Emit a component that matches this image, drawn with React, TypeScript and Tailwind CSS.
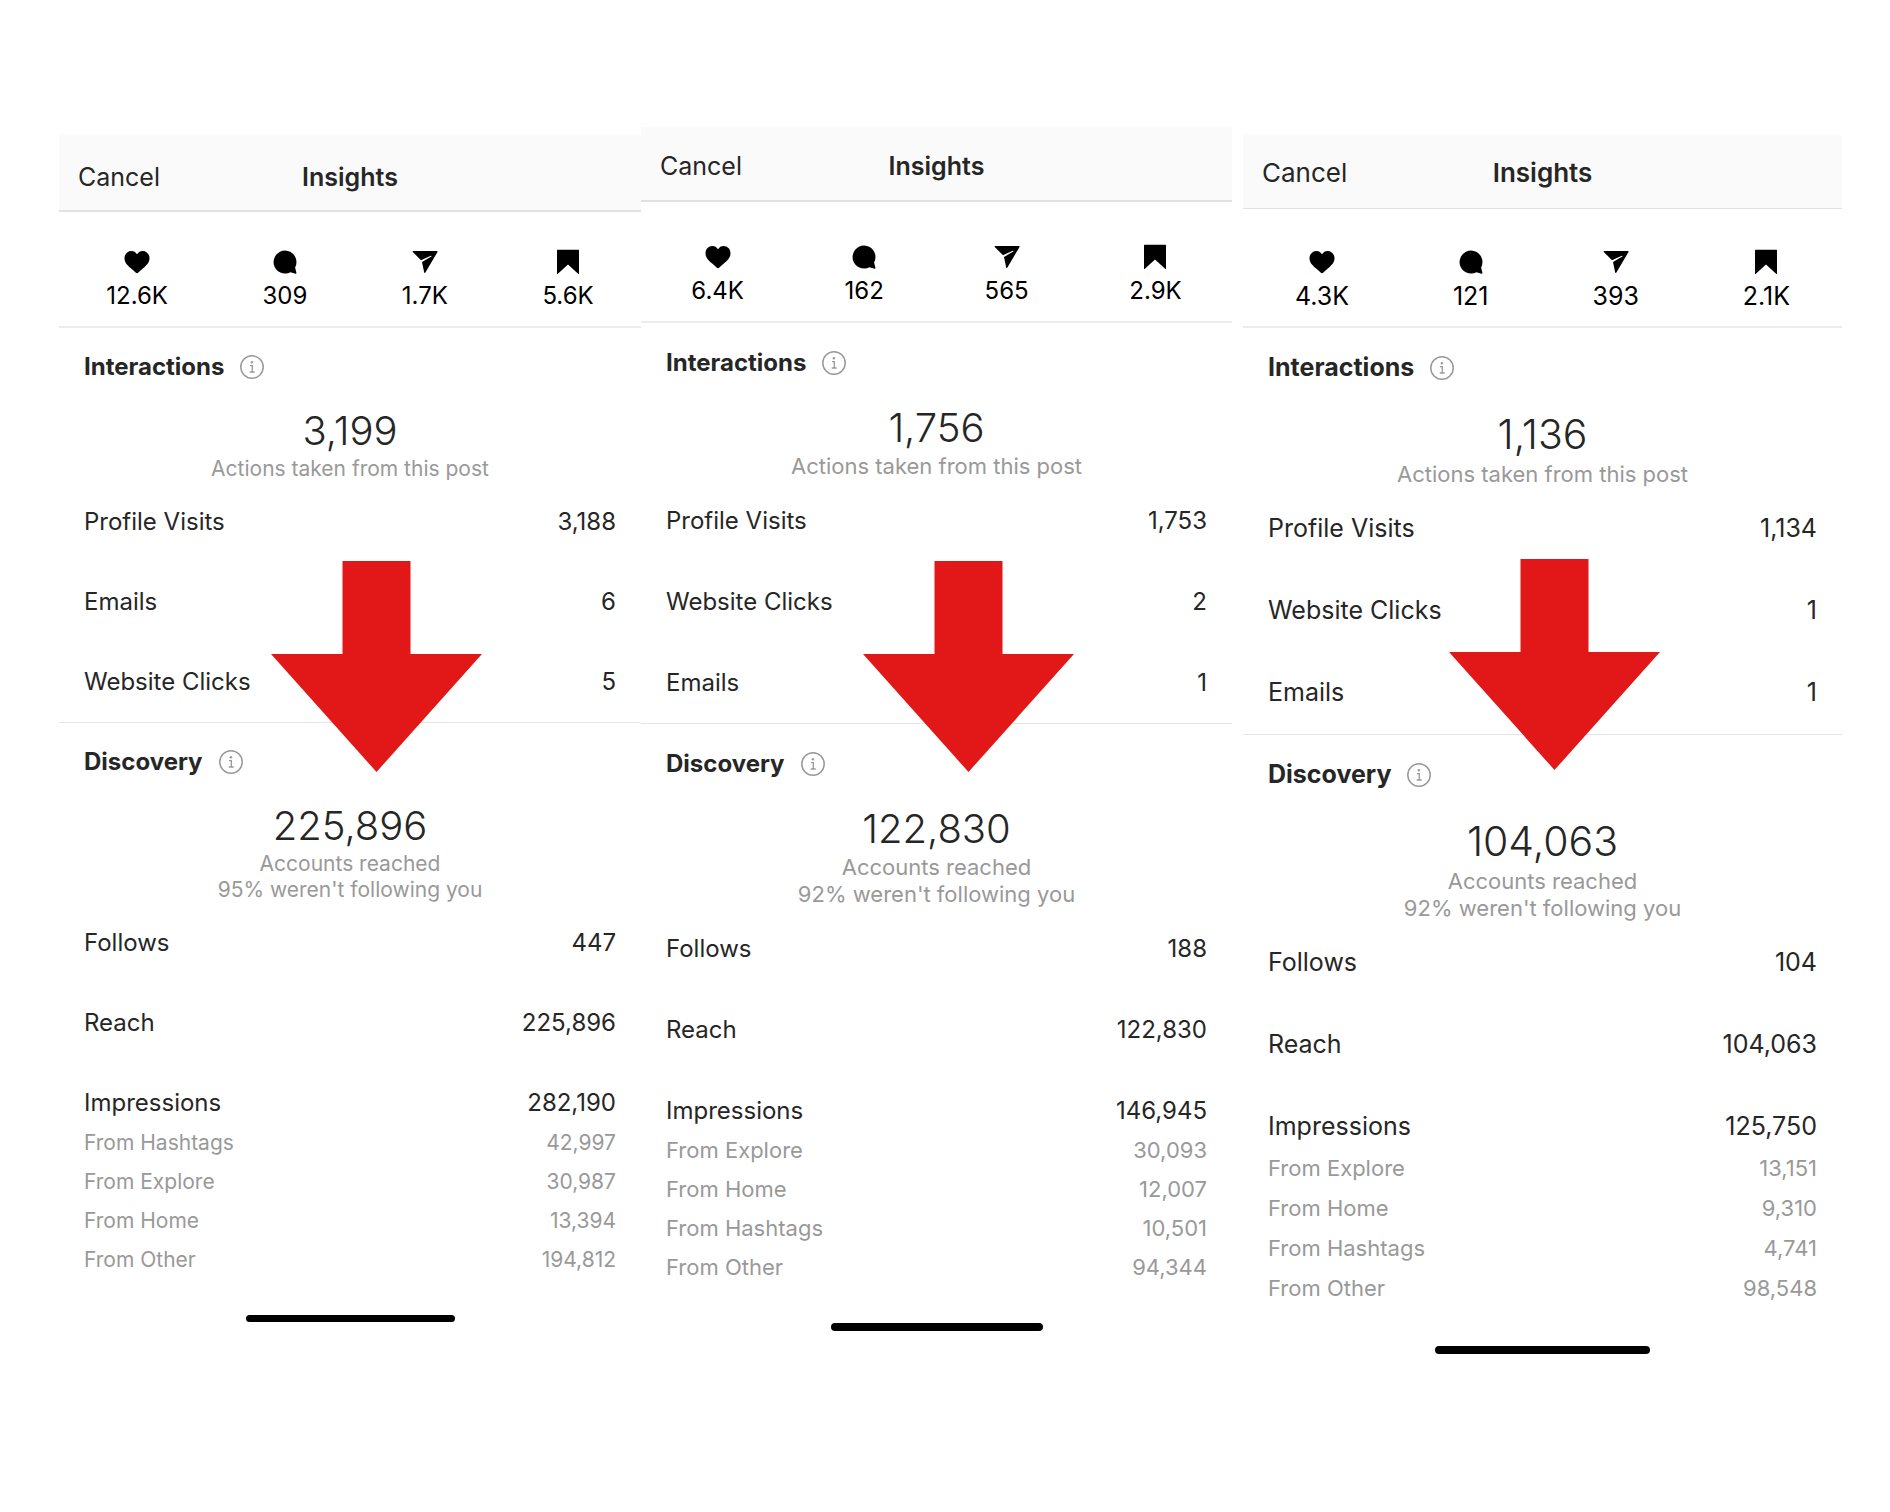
interface Row {
  label: string
  value: string
}

interface Panel {
  stats: { likes: string; comments: string; shares: string; saves: string }
  interactions: string
  actions: Row[]
  discovery: string
  notFollowing: string
  reach: Row[]
  impressions: string
  sources: Row[]
  size: typeof small
}

const small = {
  panel: "mt-2",
  header: "h-[77px] border-b-2 pb-[17px]",
  title: "text-[25px]",
  stats: "h-[116px]",
  body: "text-[24px]",
  heading: "h-[78px]",
  total: "h-[50px] text-[40px]",
  note: "text-[21px] leading-[26px]",
  row: "h-[80px]",
  lastRow: "h-[60px] pt-5",
  source: "h-[39px] text-[21px]",
  arrow: "left-[212px] top-[426px]",
  bar: "mt-[36px] h-[7px] w-[209px]",
}

const medium = {
  panel: "",
  header: "h-[75px] border-b-2 pb-[18px]",
  title: "text-[25px]",
  stats: "h-[121px]",
  body: "text-[24px]",
  heading: "h-[79px]",
  total: "h-[51px] text-[40px]",
  note: "text-[22px] leading-[27px]",
  row: "h-[81px]",
  lastRow: "h-[61px] pt-5",
  source: "h-[39px] text-[22px]",
  arrow: "left-[222px] top-[434px]",
  bar: "mt-[36px] h-2 w-[212px]",
}

const large = {
  panel: "mt-2 ml-[11px]",
  header: "h-[74px] border-b pb-[19px]",
  title: "text-[26px]",
  stats: "h-[119px]",
  body: "text-[25px]",
  heading: "h-[80px]",
  total: "h-[53px] text-[41px]",
  note: "text-[22px] leading-[27px]",
  row: "h-[82px]",
  lastRow: "h-[62px] pt-5",
  source: "h-[40px] text-[22px]",
  arrow: "left-[206px] top-[424px]",
  bar: "mt-[38px] h-2 w-[215px]",
}

const panels: Panel[] = [
  {
    stats: { likes: "12.6K", comments: "309", shares: "1.7K", saves: "5.6K" },
    interactions: "3,199",
    actions: [
      { label: "Profile Visits", value: "3,188" },
      { label: "Emails", value: "6" },
      { label: "Website Clicks", value: "5" },
    ],
    discovery: "225,896",
    notFollowing: "95%",
    reach: [
      { label: "Follows", value: "447" },
      { label: "Reach", value: "225,896" },
    ],
    impressions: "282,190",
    sources: [
      { label: "From Hashtags", value: "42,997" },
      { label: "From Explore", value: "30,987" },
      { label: "From Home", value: "13,394" },
      { label: "From Other", value: "194,812" },
    ],
    size: small,
  },
  {
    stats: { likes: "6.4K", comments: "162", shares: "565", saves: "2.9K" },
    interactions: "1,756",
    actions: [
      { label: "Profile Visits", value: "1,753" },
      { label: "Website Clicks", value: "2" },
      { label: "Emails", value: "1" },
    ],
    discovery: "122,830",
    notFollowing: "92%",
    reach: [
      { label: "Follows", value: "188" },
      { label: "Reach", value: "122,830" },
    ],
    impressions: "146,945",
    sources: [
      { label: "From Explore", value: "30,093" },
      { label: "From Home", value: "12,007" },
      { label: "From Hashtags", value: "10,501" },
      { label: "From Other", value: "94,344" },
    ],
    size: medium,
  },
  {
    stats: { likes: "4.3K", comments: "121", shares: "393", saves: "2.1K" },
    interactions: "1,136",
    actions: [
      { label: "Profile Visits", value: "1,134" },
      { label: "Website Clicks", value: "1" },
      { label: "Emails", value: "1" },
    ],
    discovery: "104,063",
    notFollowing: "92%",
    reach: [
      { label: "Follows", value: "104" },
      { label: "Reach", value: "104,063" },
    ],
    impressions: "125,750",
    sources: [
      { label: "From Explore", value: "13,151" },
      { label: "From Home", value: "9,310" },
      { label: "From Hashtags", value: "4,741" },
      { label: "From Other", value: "98,548" },
    ],
    size: large,
  },
]

const icons = {
  likes: "M16 8.3C14.7 6.2 12.8 5 10.4 5C6.6 5 3.5 8.1 3.5 12.2C3.5 16.6 6.6 19.4 10.2 22.6C12 24.2 13.6 25.6 14.9 26.8C15.6 27.4 16.4 27.4 17.1 26.8C18.4 25.6 20 24.2 21.8 22.6C25.4 19.4 28.5 16.6 28.5 12.2C28.5 8.1 25.4 5 21.6 5C19.2 5 17.3 6.2 16 8.3Z",
  comments: "M16 4.6A11.5 11.5 0 1 0 21.4 26.3L26.6 27.7C27.2 27.8 27.6 27.4 27.4 26.8L26.1 21.6A11.5 11.5 0 0 0 16 4.6Z",
  shares: "M4.2 5H27.9C28.5 5 28.8 5.5 28.5 6L16.4 26.6C16.1 27.2 15.4 27.1 15.2 26.4L13 15.9L22.3 10.6C22.9 10.2 22.5 9.4 21.8 9.7L12 14.2L3.8 6C3.3 5.5 3.6 5 4.2 5Z",
  saves: "M5.6 3.8H26.4C26.8 3.8 27 4 27 4.4V27.4C27 28 26.5 28.2 26.1 27.8L16 18.4L5.9 27.8C5.5 28.2 5 28 5 27.4V4.4C5 4 5.2 3.8 5.6 3.8Z",
}

function Stat({ icon, label, value }: { icon: string; label: string; value: string }) {
  return (
    <li className="flex flex-col items-center gap-1">
      <svg viewBox="0 0 32 32" className="h-8 w-8 fill-black" role="img" aria-label={label}>
        <path d={icon} />
      </svg>
      <span className="leading-7 text-black">{value}</span>
    </li>
  )
}

function Heading({ title, className }: { title: string; className: string }) {
  return (
    <div className={`flex items-center gap-4 px-[25px] ${className}`}>
      <h2 className="font-bold">{title}</h2>
      <button type="button" aria-label={`About ${title}`}>
        <svg viewBox="0 0 24 24" className="h-6 w-6" fill="none" stroke="#999" strokeWidth="1.5">
          <circle cx="12" cy="12" r="11.2" />
          <circle cx="11.9" cy="7.2" r="1.2" fill="#999" stroke="none" />
          <path d="M10 10.6H12.3V16.6M9.7 17H14.7" strokeWidth="1.3" />
        </svg>
      </button>
    </div>
  )
}

function RowLine({ row, className }: { row: Row; className: string }) {
  return (
    <tr>
      <th scope="row" className={`p-0 text-left font-normal ${className}`}>{row.label}</th>
      <td className={`p-0 text-right ${className}`}>{row.value}</td>
    </tr>
  )
}

function InsightsPanel({ panel }: { panel: Panel }) {
  const { size, stats } = panel
  return (
    <article className={`relative ${size.panel} ${size.body}`}>
      <header className={`grid grid-cols-3 items-end border-[#e1e1e1] bg-[#fafafa] px-[19px] leading-8 ${size.header} ${size.title}`}>
        <button type="button" className="justify-self-start">Cancel</button>
        <h1 className="text-center font-semibold">Insights</h1>
      </header>

      <ul className={`flex items-end justify-around border-b-2 border-[#ececec] pb-4 ${size.stats}`}>
        <Stat icon={icons.likes} label="Likes" value={stats.likes} />
        <Stat icon={icons.comments} label="Comments" value={stats.comments} />
        <Stat icon={icons.shares} label="Shares" value={stats.shares} />
        <Stat icon={icons.saves} label="Saves" value={stats.saves} />
      </ul>

      <section className="border-b border-[#e4e4e4]">
        <Heading title="Interactions" className={size.heading} />
        <p className={`flex items-center justify-center font-light ${size.total}`}>{panel.interactions}</p>
        <p className={`text-center text-[#999] ${size.note}`}>Actions taken from this post</p>
        <div className="px-[25px]">
          <table className="w-full">
            <tbody>
              {panel.actions.map((row) => (
                <RowLine key={row.label} row={row} className={size.row} />
              ))}
            </tbody>
          </table>
        </div>
      </section>

      <section>
        <Heading title="Discovery" className={size.heading} />
        <p className={`flex items-center justify-center font-light ${size.total}`}>{panel.discovery}</p>
        <p className={`text-center text-[#999] ${size.note}`}>
          Accounts reached
          <br />
          {panel.notFollowing} weren't following you
        </p>
        <div className="px-[25px]">
          <table className="w-full">
            <tbody>
              {panel.reach.map((row) => (
                <RowLine key={row.label} row={row} className={size.row} />
              ))}
              <RowLine row={{ label: "Impressions", value: panel.impressions }} className={size.lastRow} />
              {panel.sources.map((row) => (
                <RowLine key={row.label} row={row} className={`text-[#999] ${size.source}`} />
              ))}
            </tbody>
          </table>
        </div>
      </section>

      <div className={`mx-auto rounded-full bg-black ${size.bar}`} />

      <svg viewBox="0 0 211 211" className={`absolute h-[211px] w-[211px] fill-[#e21818] ${size.arrow}`} aria-hidden="true">
        <path d="M71.5 0H139.5V93H211L105.5 211L0 93H71.5Z" />
      </svg>
    </article>
  )
}

export default function App() {
  return (
    <main className="min-h-screen bg-white pt-[127px] pr-[48px] pb-[127px] pl-[59px] font-['Inter',sans-serif] text-[#262626]">
      <div className="grid grid-cols-[582fr_591fr_610fr] items-start">
        {panels.map((panel) => (
          <InsightsPanel key={panel.discovery} panel={panel} />
        ))}
      </div>
    </main>
  )
}
